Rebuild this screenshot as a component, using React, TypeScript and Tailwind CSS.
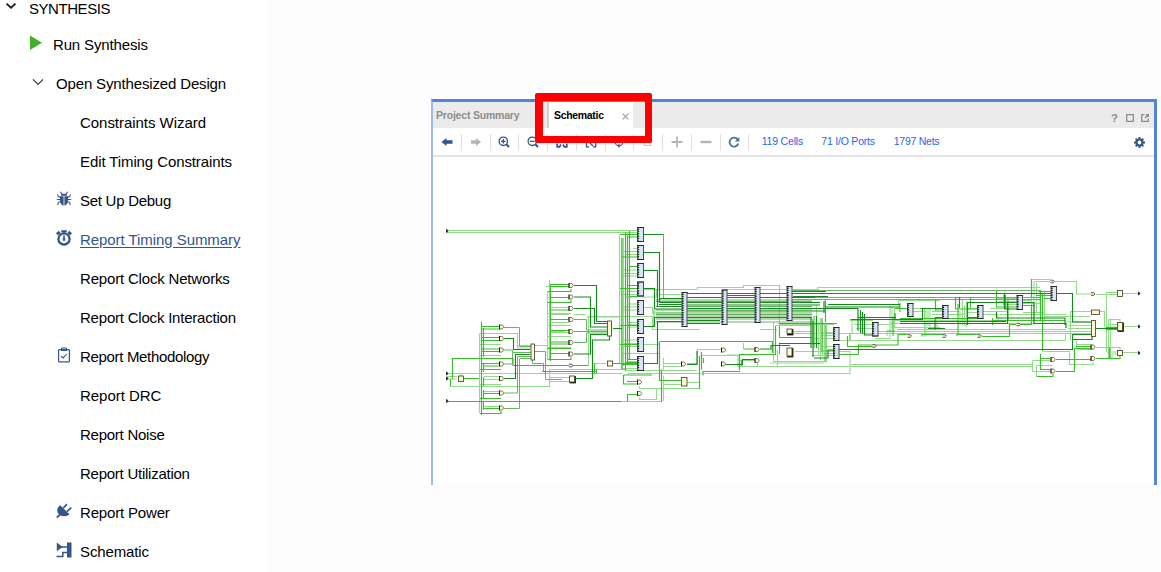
import React from "react";

const SANS = "font-['Liberation_Sans',Arial,sans-serif]";

function Caret({ bold }: { bold?: boolean }) {
  return bold ? (
    <svg width="12" height="12" viewBox="0 0 12 12" fill="none" stroke="#1c1c1c" strokeWidth="1.9">
      <path d="M1.5 3.6 L6 7.8 L10.5 3.6" />
    </svg>
  ) : (
    <svg width="12" height="12" viewBox="0 0 12 12" fill="none" stroke="#3a3a3a" strokeWidth="1.2">
      <path d="M1 3.3 L6 8.3 L11 3.3" />
    </svg>
  );
}

function Play() {
  return (
    <svg width="12" height="16" viewBox="0 0 12 16" fill="#3eb228">
      <path d="M0 0.5 L12 7.8 L0 15 Z" />
    </svg>
  );
}

function Bug() {
  return (
    <svg width="16" height="16" viewBox="0 0 16 16" fill="#34558b" stroke="#34558b">
      <path d="M4.5 4.7 Q5 2.5 8 2.5 Q11 2.5 11.5 4.7 Z M4 5.2 H7.6 V14.7 Q3.9 13.8 4 9 Z M12 5.2 H8.4 V14.7 Q12.1 13.8 12 9 Z" stroke="none" />
      <path d="M5.8 3 L4.4 0.8 M10.2 3 L11.6 0.8 M4.5 6.5 L2.3 5.6 L1.5 3.4 M11.5 6.5 L13.7 5.6 L14.5 3.4 M4.5 8.5 H0.8 M11.5 8.5 H15.2 M4.7 10.5 L2.5 11.3 L1.7 13.9 M11.3 10.5 L13.5 11.3 L14.3 13.9" fill="none" strokeWidth="1.1" />
    </svg>
  );
}

function Stopwatch() {
  return (
    <svg width="16" height="16" viewBox="0 0 16 16" fill="none" stroke="#34558b">
      <circle cx="8" cy="8.9" r="5.6" strokeWidth="2.3" />
      <path d="M5.3 1.3 H10.7 M8 1.5 V3.4" strokeWidth="2" />
      <path d="M0.9 4.3 L3.7 1.9 M15.1 4.3 L12.3 1.9" strokeWidth="2.8" />
      <path d="M8 5.3 V9" strokeWidth="1.5" />
      <circle cx="8" cy="9.5" r="0.9" strokeWidth="1.1" />
    </svg>
  );
}

function Clipboard() {
  return (
    <svg width="16" height="16" viewBox="0 0 16 16" fill="none" stroke="#34558b">
      <rect x="2.6" y="2.6" width="10.8" height="12.2" rx="0.7" strokeWidth="1.2" />
      <path d="M5.5 2.6 V1 H10.5 V2.6" strokeWidth="1" />
      <path d="M5 3 H11" strokeWidth="2" />
      <path d="M5.2 9 L7.2 10.9 L10.8 7" strokeWidth="1.1" />
    </svg>
  );
}

function Plug() {
  return (
    <svg width="16" height="16" viewBox="0 0 16 16" fill="#34558b" stroke="#34558b">
      <path d="M4.2 2.2 L13.6 11.5 Q11 13.4 7.6 13.1 Q5.4 13.3 3.6 12 Q1 9.5 1.2 6.5 Q1.8 3.4 4.2 2.2 Z" stroke="none" />
      <path d="M4 11.8 L0.7 14.6" strokeWidth="1.8" fill="none" />
      <path d="M7.2 5.2 L10.9 1.1 M10.8 8.6 L15.3 4.7" strokeWidth="1.7" fill="none" />
    </svg>
  );
}

function SchematicIcon() {
  return (
    <svg width="16" height="16" viewBox="0 0 16 16" fill="#34558b" stroke="#34558b">
      <path d="M11 0.5 H15.5 V15.5 H11 Z M0.8 0.5 L6.5 5 L0.8 9.2 Z" stroke="none" />
      <path d="M5 5 H11 M11 10.5 H6.8 V14.5 H0.5" strokeWidth="1.5" fill="none" />
    </svg>
  );
}

type Item = { label: string; spacing: string; icon?: React.ReactNode; link?: boolean };

const items: Item[] = [
  { label: "Constraints Wizard", spacing: "tracking-[-0.04px]" },
  { label: "Edit Timing Constraints", spacing: "tracking-[-0.1px]" },
  { label: "Set Up Debug", spacing: "tracking-[-0.27px]", icon: <Bug /> },
  { label: "Report Timing Summary", spacing: "tracking-[-0.06px]", icon: <Stopwatch />, link: true },
  { label: "Report Clock Networks", spacing: "tracking-[-0.18px]" },
  { label: "Report Clock Interaction", spacing: "tracking-[-0.21px]" },
  { label: "Report Methodology", spacing: "tracking-[-0.33px]", icon: <Clipboard /> },
  { label: "Report DRC", spacing: "tracking-[-0.04px]" },
  { label: "Report Noise", spacing: "tracking-[-0.25px]" },
  { label: "Report Utilization", spacing: "tracking-[-0.25px]" },
  { label: "Report Power", spacing: "tracking-[-0.17px]", icon: <Plug /> },
  { label: "Schematic", spacing: "tracking-[-0.12px]", icon: <SchematicIcon /> },
];

function Sidebar() {
  return (
    <nav className="flex w-[269px] shrink-0 flex-col bg-white text-[15px] leading-[18px] text-black">
      <div className="flex h-[25px] items-start">
        <span className="ml-[5px] mr-3"><Caret bold /></span>
        <span className="tracking-[-0.45px]">SYNTHESIS</span>
      </div>
      <div className="flex h-[39px] items-center">
        <span className="mb-1 ml-[30px] mr-[11px]"><Play /></span>
        <span className="tracking-[-0.15px]">Run Synthesis</span>
      </div>
      <div className="flex h-[39px] items-center">
        <span className="mb-1 ml-8 mr-3"><Caret /></span>
        <span className="tracking-[-0.15px]">Open Synthesized Design</span>
      </div>
      {items.map((it) => (
        <div key={it.label} className="flex h-[39px] items-center pl-14">
          <span className="mb-1 mr-2 h-4 w-4">{it.icon}</span>
          <span className={`${it.spacing} ${it.link ? "text-[#34558b] underline underline-offset-2" : ""}`}>{it.label}</span>
        </div>
      ))}
    </nav>
  );
}

function ToolIcon({ name }: { name: string }) {
  const navy = "#34558b";
  switch (name) {
    case "back":
      return <path d="M0.5 6 L5.5 2 V4.3 H11.5 V7.7 H5.5 V10 Z" fill={navy} />;
    case "forward":
      return <path d="M11 6 L6 2 V4.3 H1 V7.7 H6 V10 Z" fill="#b5b5b5" />;
    case "in":
    case "out":
      return (
        <g fill="none" stroke={navy}>
          <circle cx="5.3" cy="5.3" r="4.2" strokeWidth="1.3" />
          <path d="M8.3 8.3 L11 11" strokeWidth="2" />
          <path d={name === "in" ? "M3 5.3 H7.6 M5.3 3 V7.6" : "M3 5.3 H7.6"} strokeWidth="1.3" />
        </g>
      );
    case "fit":
      return <path d="M2 1 L5 4 M10 1 L7 4 M1.2 7.5 V10.8 H3.5 L5 8.5 M10.8 7.5 V10.8 H8.5 L7 8.5" fill="none" stroke={navy} strokeWidth="1.7" />;
    case "select":
      return <path d="M1.5 7 V10.8 H4 M8 10.8 H10.7 V7 M4 6 L8 10" fill="none" stroke={navy} strokeWidth="1.3" />;
    case "target":
      return (
        <g fill="none" stroke={navy} strokeWidth="1.2">
          <circle cx="6" cy="6" r="3.8" />
          <path d="M6 0 V4 M6 8 V11.5 M0 6 H4 M8 6 H12" />
        </g>
      );
    case "chip":
      return <path d="M2.5 3 H8.5 V9.5 H2.5 Z M0.5 6 H2.5 M8.5 6 H11" fill="none" stroke="#c6c6c6" strokeWidth="1.2" />;
    case "plus":
      return <path d="M0.5 6 H11.5 M6 0.5 V11.5" stroke="#b5b5b5" strokeWidth="1.8" />;
    case "minus":
      return <path d="M0.5 6 H11.5" stroke="#b5b5b5" strokeWidth="2.4" />;
    default:
      return (
        <g>
          <path d="M9.7 3.4 A4.5 4.5 0 1 0 10.3 7.6" fill="none" stroke="#526e9d" strokeWidth="1.8" />
          <path d="M11.3 1 V5.5 H6.8 Z" fill="#526e9d" />
        </g>
      );
  }
}

const tools = ["back", "forward", "in", "out", "fit", "select", "target", "chip", "plus", "minus", "refresh"];

function Toolbar() {
  return (
    <div className="flex h-[28px] shrink-0 items-center bg-white">
      {tools.map((t) => (
        <div key={t} className="flex h-[17px] w-[28.75px] shrink-0 items-center justify-center border-r border-[#e0e0e0]">
          <svg width="12" height="12" viewBox="0 0 12 12"><ToolIcon name={t} /></svg>
        </div>
      ))}
      <div className="ml-[12.5px] mb-0.5 flex flex-1 text-[10.5px] leading-[14px] text-[#2864f0]">
        <span className="w-[59.5px] whitespace-nowrap tracking-[-0.2px]">119 Cells</span>
        <span className="w-[72.5px] whitespace-nowrap tracking-[-0.2px]">71 I/O Ports</span>
        <span className="whitespace-nowrap tracking-[-0.25px]">1797 Nets</span>
      </div>
      <svg className="mr-[9px]" width="11" height="11" viewBox="0 0 11 11" fill="none" stroke="#34558b">
        <circle cx="5.5" cy="5.5" r="3" strokeWidth="2.2" />
        <path d="M5.5 0 V2 M5.5 9 V11 M0 5.5 H2 M9 5.5 H11 M1.7 1.7 L3 3 M8 8 L9.3 9.3 M9.3 1.7 L8 3 M3 8 L1.7 9.3" strokeWidth="2" />
      </svg>
    </div>
  );
}

function TabBar() {
  return (
    <div className="flex h-[26px] shrink-0 bg-[#ebebeb] text-[10.5px] font-bold leading-[26px]">
      <div className="w-[114px] whitespace-nowrap pl-[3px] tracking-[-0.2px] text-[#8d8d8d]">Project Summary</div>
      <div className="w-0.5 bg-[#cfcfcf]" />
      <div className="flex w-[84px] items-center bg-white pl-[5px] text-black">
        <span className="w-[68px] tracking-[-0.32px]">Schematic</span>
        <svg className="mt-0.5" width="7" height="7" viewBox="0 0 7 7" stroke="#9a9a9a" strokeWidth="1.1"><path d="M0.7 0.7 L6.3 6.3 M6.3 0.7 L0.7 6.3" /></svg>
      </div>
      <div className="flex flex-1 items-center justify-end gap-[7px] pr-[5px] pt-1.5 text-[#8d8d8d]">
        <span className="mr-px text-[11.5px]">?</span>
        <svg width="8" height="8" viewBox="0 0 8 8" fill="none" stroke="#8d8d8d" strokeWidth="1.3"><path d="M0.7 0.7 H7.3 V7.3 H0.7 Z" /></svg>
        <svg width="8" height="8" viewBox="0 0 8 8" fill="none" stroke="#8d8d8d" strokeWidth="1.3"><path d="M3.5 0.7 H0.7 V7.3 H7.3 V4.5 M4 4 L7 1 M5 0.7 H7.3 V3" /></svg>
      </div>
    </div>
  );
}

// Nets, in sheet coordinates, grouped by how heavily they are drawn.
const lightNets = [
  "M447 230.5 H637 M447 232.5 H637",
  "M479.5 333.5 V413 M479.5 333.5 H517.5 V345.5 H547.5 M517.5 345 V348 H531 M479.5 344.5 H501 M479.5 355.5 H501 M479.5 369.5 H501 M479.5 384.5 H501 M479.5 398.5 H501",
  "M484 379.5 H499 M484 376.5 H499 M484 391.5 H499 M484 406.5 H499",
  "M447 373.5 H622 M447 376.5 H457 M461 373 V376 M447 379 H457 M450 386.5 H549.5 V369.5 H625 M549.5 377.5 H569 M549.5 381.5 H569",
  "M549 331.5 H565 M547.5 291.5 V359 M551.5 307.5 H569 M551.5 314.5 H569 M547.5 313.5 H571 M551.5 322.5 H569 M551.5 332.5 H569 M547.5 325.5 H571 M547.5 336.5 H571 M547.5 347.5 H571",
  "M549.5 280 V360 M574 314.5 H585.5 M586.5 317 H619 M588.5 316.5 V365.5 M588.5 316.5 H652.5 V329.5 H700 M574 365.5 H588 M594.5 363.5 H606",
  "M619.5 235 V363 M621.5 238 V368 M623.5 238 V366 M627.5 232 V365 M633 248.5 H637 M626 254.5 H637 M624 251.5 H637 M624 270 H637 M624 273.5 H637 M622 276 H637 M628 291.5 H637 M622 294.5 H637 M628 304 H637 M622 307 H637 M622 310 H637 M628 322.5 H637 M628 327 H637 M624 340 H637 M624 343.5 H637 M622 346.5 H637 M628 361.5 H637 M622 368.5 H637",
  "M643 307.5 H652.5 V313 H682 M643 344.5 H658.5 M656.5 289.5 H681 M656.5 289.5 V297 H625 M660 294.5 H682 M622 353.5 H660 M546 286.5 H569",
  "M639.5 386.5 V388.5 H699.5 M628 373.5 H699 M625 370.5 H697 M639.5 397.5 V399.5 H656.5 V388 M622.5 401.5 H662 M663.5 375.5 V401 M663.5 358 V370 M663.5 363.5 H681 M663.5 366.5 H681 M663.5 384.5 H681",
  "M697.5 289.5 H643 M697.5 289.5 V287.5 H743.5 V285.5 H779.5 V323 M779.5 285.5 V324.5 H834 M697.5 293.5 H722 M726 289.5 H818 V287.5 H1040",
  "M687 363.5 H697.5 V349.5 H721 M687 382.5 H699.5 M700.5 355.5 H738 V366.5 H850 M700.5 373.5 H850",
  "M726 364.5 H739.5 V360.5 H755 M757.5 353.5 V355 H727 M757.5 363 V366 M743.5 343 V349 M779.5 345.5 H787 M773.5 322.5 V361.5 H825 M775.5 325.5 H813 M777.5 350.5 V366 M770 363 H824",
  "M793 331.5 H812 M795 351.5 H836 M812.5 319 V345 M818.5 322 V356 M822.5 322 V356 M816.5 305 V345 M820.5 318 V360 M824.5 325 V362",
  "M812 355.5 H834 M839 351.5 H850 V373.5 M850 366.5 H1032 M850 364.5 H1032 M840 340.5 H1065.5 V333.5 H1091 M760 329.5 H776 V331.5",
  "M793 333.5 H1066 M820 346.5 H834 M822 350.5 H834 M822 353.5 H834 M820 332.5 H834 M820 335.5 H834 M814 338.5 H834 M840 333.5 H852 V321",
  "M850 320.5 H873 M854 324.5 H873 M856 328.5 H873 M878 331.5 H887 V336 M878 324.5 H890 M890 305 V338.5 H875 M892 307 V329 M894.5 308 V328 M898.5 300.5 V307 M898.5 300.5 H940",
  "M913 308.5 H928 V326 M913 311.5 H926 V336 M924.5 309 V337 M930 308 V328 M932 311.5 H943 M932 314.5 H943 M935.5 301 V312 M937 318 V330",
  "M948 311.5 H960 V325 M948 314.5 H965 M962.5 300 V325 M964.5 306 V326 M966.5 301 V327 M968 308.5 H978 M968 312.5 H978 M983 311.5 H995 M983 314.5 H998 V322",
  "M890 323.5 H1066 M895 320.5 H1066 M897 329.5 H1066 M895 327.5 H940 M880 331.5 H1080 M997 298.5 H1017 M999 301.5 H1017 M1003.5 295 V305 M1006 304.5 H1017",
  "M1022 303.5 H1040 V291 M1031.5 280.5 V325 M1034 282 V325 M1036.5 283 V312 M1032 279.5 H1050 M1034 281.5 H1050 M1055 281.5 H1076.5 V294 H1091 M1040.5 290 V322 M1044.5 292 V320",
  "M1022 300.5 H1032 M1044 316.5 H1090 M1023 312.5 H1044 M1000 314.5 H1066 M990 308.5 H1010 M988 311.5 H1008",
  "M1070.5 311.5 H1091 M1070.5 311.5 V340 M1099 311.5 H1104.5 V327 H1117 M1106.5 292.5 H1117 M1106.5 292.5 V352 H1117 M1108.5 319.5 H1120 V322 M1096 294.5 H1117",
  "M1123 293.5 H1139 M1123 326.5 H1139 M1123 352.5 H1139 M1106 324.5 H1117 M1108.5 319.5 V358 M1110.5 319.5 V359 M1112 359 V354 H1117",
  "M1066 322 H1091 M1068 325.5 H1091 M1068 328.5 H1091 M1068 331.5 H1091 M1076.5 341 V348 M1077 349.5 H1093 M1069.5 352.5 V364.5 H1093 V362 M1042.5 351.5 H1070",
  "M1032.5 360.5 V371.5 H1050 M1032.5 360.5 H1050 M1036.5 365.5 V376.5 M1036.5 365.5 H1052",
  "M1096 347.5 H1120 V350 M1076 344.5 H1091",
];

const midNets = [
  "M447 401.5 H622 M481.5 321.5 V415 M483.5 328 V357 M483.5 363 V372 M483.5 377 V386 M483.5 390 V399 M483.5 401 V410",
  "M482 326.5 H499 M482 329 H499 M482 337.5 H499 M482 340.5 H499 M482 349 H499 M482 351.5 H499 M482 363.5 H499 M484 366 H499 M484 393.5 H499 M484 408.5 H499",
  "M480 413.5 H501 V411 M480 398.5 H501 M480 369.5 H501 M464 378.5 H479 M450.5 386 V379 M452.5 379 V358.5 H513 V365.5 H588.5",
  "M547.5 291.5 H571 V289 M547.5 302.5 H571 V300 M547.5 348.5 H571 M547.5 359.5 H571 V357 M551 284.5 H569 M551 286.5 H569 M551 297.5 H569 M550 310 H569 M550 319.5 H569 M551 330.5 H569 M551 342 H569 M551 344 H569 M551 353.5 H569",
  "M550.5 284 V361 M594.5 363 V374 M596.5 369 V374 M542 371.5 H597 M625.5 232 V371 M627.5 236 V362 M629.5 231 V359 M622 238 V370",
  "M620 234.5 H637 M628 237 H637 M622 257 H637 M630 266.5 H637 M628 285.5 H637 M620 288.5 H637 M630 296.5 H637 M628 325 H637 M620 344.5 H637 M628 359.5 H637 M626 362.5 H637 M622 364.5 H637 M620 325.5 H637",
  "M613 363.5 H637 M623.5 375 H652 M623.5 375 V384 H638 M627.5 401.5 V394.5 H638 M627 381.5 H637 M660 341.5 H772.5 V353 M659.5 341.5 V380.5 H681 M661.5 402 V369.5",
  "M699.5 389 V356 M701.5 352 V369.5 M701.5 361.5 V369.5 M739.5 370 V354.5 H775.5 V326 M743.5 349 H755 M703.5 363 V358 M703 375.5 V371.5 H740",
  "M741.5 360.5 V366 M778.5 323.5 H837 M779.5 337.5 H812 M826 362.5 V325 M779.5 343 V354",
  "M779.5 326 V337.5 M808 293.5 H829 M814 316 V348 M822 318 V352 M825.5 300 V322",
  "M847.5 336 V346.5 H873 M858.5 354 V345 H898 V334.5 H907 M839 354.5 H858.5 M850 334 V340 M922 336.5 V334.5 H943 M957 336 V334.5 H977",
  "M850 319.5 H895 M887 331 H895 M893 316.5 V336 M900 318.5 H980 M900 303 V312 M895 308.5 H908 M935.5 300 V310 H943 M920 308.5 H943 M955.5 297 V309 H978 M970.5 297 V308",
  "M958 334.5 V304 M982 336.5 H1009.5 V324.5 H1016 M1021 324.5 H1031.5 V305 M996.5 291 V307 H1017 M997 302.5 H1017 M1005.5 295 V308 M1008 299.5 V320 M992.5 318 V325 M992.5 320.5 H1065",
  "M1038.5 291.5 H1051 M1036 295.5 H1051 M1031.5 279 V297 M1040.5 290 V320 M1042.5 294 V351 M1044 298.5 H1051",
  "M1022 305.5 H1034 M1074.5 348 V371.5 H1056 M1074.5 348.5 H1091 M1056 359.5 H1091 M1096 358.5 H1120 V356 M1109.5 347 V358 M1076 346.5 H1091",
  "M1106 327.5 H1117 M1106 329.5 H1117 M1040.5 354 V369.5 H1050 M1040.5 358.5 H1050 M1036.5 376.5 H1053 V374",
];

const darkNets = [
  "M504 338.5 H513.5 V349.5 H530 M515.5 378.5 V354.5 H530 M504 378.5 H516",
  "M574 285.5 H596.5 V321.5 H607 M574 297 H590.5 V327 H607 M574 308.5 H594.5 V323.5 H607 M590.5 354 V334.5 H607 M574 354 H591 M576 378.5 H592.5 V340 H609.5 V336 M613 328.5 H622",
  "M643 234.5 H663.5 M643 252.5 H659.5 V302.5 H682 M643 270.5 H657.5 V306.5 H682 M643 288.5 H654.5 V309 M654.5 317 V326.5 H643 M643 363.5 H657.5 V321.5 H682 M655 317.5 H682 M655 309 H682 M659 304.5 H682 M660 298.5 H682",
  "M687 293.5 H1040 M687 297.5 H815 M687 302.5 H820 M687 305 H820 M687 308.5 H828 M687 311 H825 M687 317.5 H812 M687 320.5 H720 M687 323.5 H720",
  "M687 364.5 H697 V351 M726 364.5 H742.5 V359.5 H755 M760 349 H771 V345.5 H790 M779 343.5 H820 M726 295.5 H755 M792 291.5 H826 M793 296.5 H828",
  "M792 317.5 H811 V348 M813 321 V357 M824 301 V313 M816.5 316 V348 M814 358 H828 V350 H834",
  "M828 304.5 H900 M825 307 H900 M820 308.5 H858 V331 M860.5 310 V333 M862.5 312 V334 M864.5 314 V335 H873 M852 319.5 H895 M858 317.5 H896 M895 313 V319.5 H922.5 V308.5 H943",
  "M928 328.5 H945 M935 317.5 V330 M935 317.5 H943 M959.5 297 V308 M968 317.5 H978 M967.5 302.5 H1017 M967.5 302 V325 M900 321.5 H1006 M900 323.5 H1006",
  "M1004.5 294 V309 H1017 M1007.5 303 V323.5 H990 M1022 302.5 H1034 V323.5 H1066 V328 M996.5 312 V318 H1065 V325 M1056 293.5 H1072.5 V322 H1091 M1032 293.5 H1051",
  "M839 349.5 H1072.5 V334.5 H1091 M1072.5 339.5 H1092 V337 M1096 328.5 H1117",
];

const denseNets = [300, 301.5, 306.5, 310, 313, 314.5, 316, 319, 322];
const gateRows = [327, 338.5, 350, 364, 378.5, 393, 408];
const gateRows2 = [285.5, 297, 308.5, 319.5, 331.5, 342.5, 354];
const smallGates: number[][] = [[571, 365.5], [874.5, 346], [909.5, 336], [944.5, 336], [979.5, 336], [1052.5, 281.5], [1093, 294], [1018.5, 324.5]];
const gates: number[][] = [
  ...gateRows.map((y) => [501.5, y]),
  ...gateRows2.map((y) => [571, y]),
  [639.5, 382], [639.5, 393.5], [683.5, 364], [723.5, 350], [723.5, 364], [757, 349.5], [757, 360.5],
  [1093, 347], [1093, 358.5], [1053, 359.5], [1053, 371],
];
// x, y, width, height
const blueBlocks: number[][] = [
  ...[227.5, 245.5, 263.5, 282, 300.5, 319.5, 337.5, 356.5].map((y) => [637.5, y, 6, 14]),
  [682, 292.5, 5, 34], [722, 290, 5, 34.5], [755, 287.5, 5, 35], [787, 286.5, 5, 34],
  [833.5, 327.5, 5.5, 13], [833.5, 344.5, 5.5, 14], [872.5, 322.5, 5.5, 13.5], [907.5, 303.5, 5.5, 13],
  [942.5, 305.5, 5.5, 13], [977.5, 305.5, 5.5, 13], [1017, 295.5, 5.5, 14], [1051, 286.5, 5.5, 14],
];
const creamBlocks: number[][] = [
  [531, 344, 3.5, 16], [458.5, 376, 5, 5.5], [569.5, 376, 5, 6], [607.5, 321, 4, 15], [607.5, 361, 5, 5],
  [681.5, 377.5, 5.5, 8.5], [787, 329, 5, 4.5], [787, 348, 5, 8], [1117.5, 290.5, 5, 6], [1091.5, 310, 8, 4.5],
  [1091.5, 320.5, 4, 16], [1117.5, 322.5, 5, 8], [1117.5, 350.5, 5, 5],
];
const shadows: number[][] = [[570, 376.5, 5.5, 6.5], [787.5, 329.5, 5.5, 5.5], [787.5, 348.5, 5.5, 8.5], [1118, 323, 5.5, 8.5]];
const ports: number[][] = [[447, 231], [447, 373.5], [447, 378.5], [447, 401], [1139, 293.5], [1139, 326.5], [1139, 353]];

function SchematicSheet() {
  return (
    <svg className="block h-[328px] w-[721px]" viewBox="433 157 721 328" fill="none">
      <g stroke="#92db8b" strokeWidth="1.1"><path d={lightNets.join(" ")} /></g>
      <g stroke="#66b563" strokeWidth="1">
        {denseNets.map((y) => <path key={y} d={`M656 ${y} H812`} />)}
        {[290.5, 297.5, 299.5].map((y) => <path key={y} d={`M793 ${y} H1040`} />)}
        <path d="M504 327.5 H519.5 V346.5 H531 M504 393 H517.5 V356.5 H531 M504 408.5 H519.5 V358.5 H531 M504 350 H512.5 V352.5 H531 M504 364 H512.5 V353 M535 351.5 H545.5 V379.5 H562 M532.5 360 V363.5 H543.5 V371.5 M574 319.5 H586.5 V330 H607 M574 342.5 H586.5 V333 H607 M574 331.5 H607 M663.5 234.5 V298.5 M643 326.5 H654 V309" />
      </g>
      <g stroke="#3bbd2b" strokeWidth="1.15"><path d={midNets.join(" ")} /></g>
      <g stroke="#148a1c" strokeWidth="1.15"><path d={darkNets.join(" ")} /></g>
      {shadows.map(([x, y, w, h]) => <rect key={`${x}-${y}`} x={x} y={y} width={w} height={h} fill="#171717" stroke="#171717" strokeWidth="0.8" />)}
      {blueBlocks.map(([x, y, w, h]) => (
        <g key={`${x}-${y}`}>
          <rect x={x} y={y} width={w} height={h} fill="#d9e4f6" stroke="#4c4c54" strokeWidth="1" />
          <path d={`M${x + 0.8} ${y + 1} V${y + h - 1}`} stroke="#16301c" strokeWidth="1.6" strokeDasharray="1.5 0.8" />
          <path d={`M${x - 0.5} ${y + h} H${x + w + 0.5} M${x - 0.5} ${y} H${x + w + 0.5}`} stroke="#222226" strokeWidth="0.8" />
        </g>
      ))}
      {creamBlocks.map(([x, y, w, h]) => <rect key={`${x}-${y}`} x={x} y={y} width={w} height={h} fill="#fdfad0" stroke="#514a3e" strokeWidth="0.9" />)}
      {gates.map(([x, y]) => (
        <g key={`${x}-${y}`}>
          <path d={`M${x - 2} ${y - 2} H${x + 0.8} L${x + 2.2} ${y} L${x + 0.8} ${y + 2} H${x - 2} Z`} fill="#fdfad0" stroke="#66604d" strokeWidth="0.8" />
          <path d={`M${x - 2} ${y - 2.5} V${y + 2.5}`} stroke="#1e1e1e" strokeWidth="1" />
        </g>
      ))}
      {smallGates.map(([x, y]) => <path key={`${x}-${y}`} d={`M${x - 2} ${y - 1.3} H${x + 0.7} L${x + 2} ${y} L${x + 0.7} ${y + 1.3} H${x - 2}`} fill="#f5f0c8" stroke="#49443b" strokeWidth="0.9" />)}
      {ports.map(([x, y]) => <path key={`${x}-${y}`} d={`M${x - 1} ${y - 1.8} H${x} L${x + 1.5} ${y} L${x} ${y + 1.8} H${x - 1} Z`} fill="#26352a" />)}
    </svg>
  );
}

export default function App() {
  return (
    <div className={`relative flex h-[572px] w-[1161px] overflow-hidden bg-[#fdfdfd] ${SANS}`}>
      <Sidebar />
      <section className="ml-[162px] mt-[99px] flex h-[386px] w-[726px] shrink-0 flex-col border-l-2 border-r-[3px] border-t-[3px] border-l-[#9fbae8] border-r-[#5485d5] border-t-[#5485d3] bg-white">
        <TabBar />
        <Toolbar />
        <div className="-mt-px h-0.5 shrink-0 bg-[#e4e4e4]" />
        <SchematicSheet />
      </section>
      <div className="absolute left-[535px] top-[93px] h-[50px] w-[117px] rounded-[2px] border-b-[7px] border-l-8 border-r-[7px] border-t-8 border-[#fe0000]" />
    </div>
  );
}
